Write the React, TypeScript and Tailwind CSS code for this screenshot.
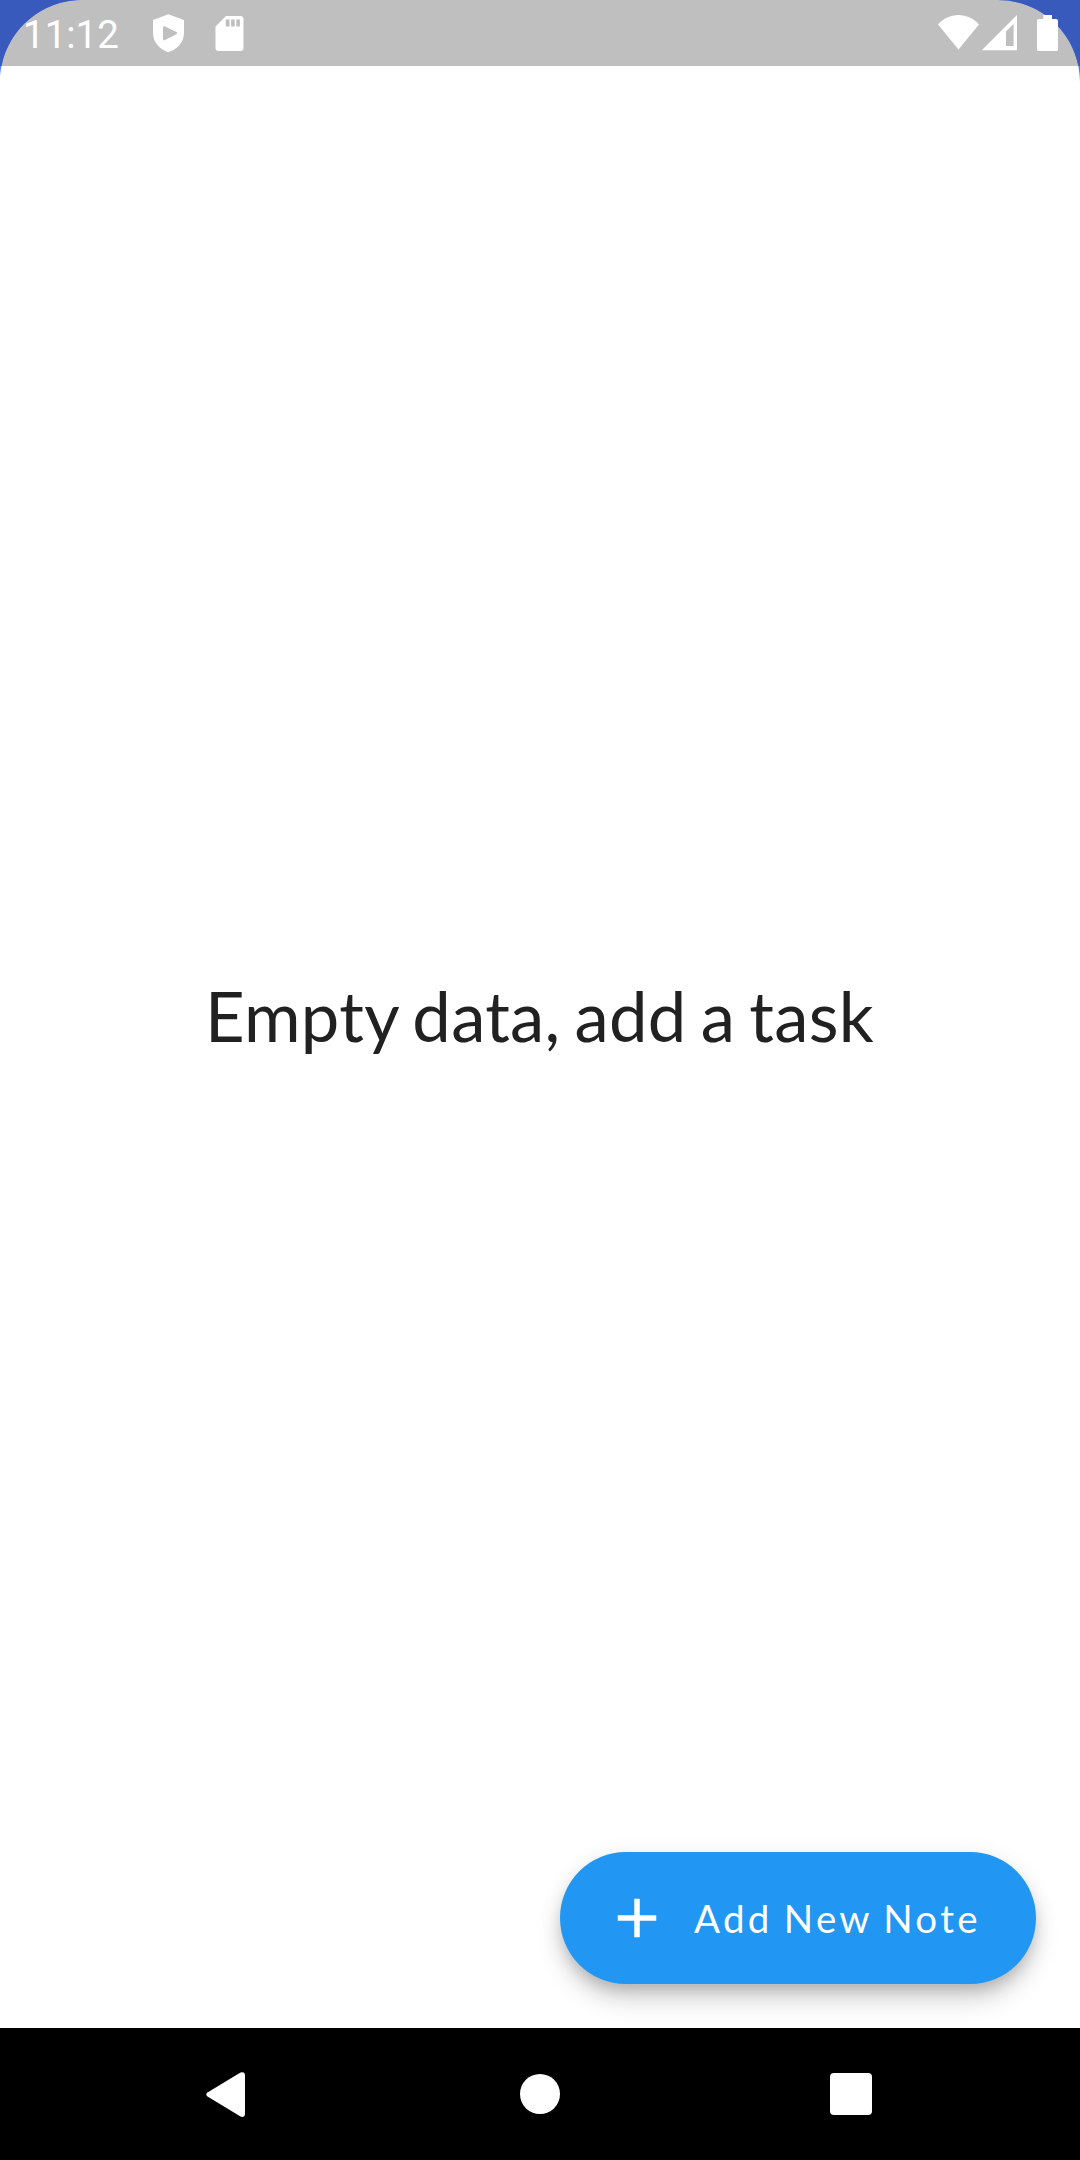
function StatusBar() {
  return (
    <header className="relative z-10 flex h-[66px] shrink-0 items-center justify-between pr-[19px] pl-[23px] text-white">
      <div className="flex h-full items-center">
        <span className="w-[99px] pt-[3px] font-['Roboto',sans-serif] text-[38.5px] leading-[46px] whitespace-nowrap">11:12</span>
        <svg className="ml-[27px] h-[66px] w-[40px]" viewBox="149 0 40 66" fill="currentColor">
          <path
            fillRule="evenodd"
            d="M168.3 14.2 184 20v13c0 9-6.5 16.500-15.700 19.300C159.500 49.500 153 42 153 33V20ZM163 27.500v11.200c0 1.400.9 1.800 2 1.200l11.300-5.700c1.200-.6 1.200-1.500 0-2.100L165 26.400c-1.100-.6-2-.2-2 1.100Z"
          />
        </svg>
        <svg className="ml-[22px] h-[66px] w-[36px]" viewBox="211 0 36 66" fill="currentColor">
          <path
            fillRule="evenodd"
            d="M226 16h14.500a3 3 0 0 1 3 3v29a3 3 0 0 1-3 3h-22a3 3 0 0 1-3-3V26.500Zm-.2 3.600v7h3.700v-7Zm5.300 0v7h3.600v-7Zm5.200 0v7h3.600v-7Z"
          />
        </svg>
      </div>
      <div className="flex h-full items-center">
        <svg className="h-[66px] w-[42px]" viewBox="938 0 42 66" fill="currentColor">
          <path d="M958.500 49.500 938 24.500c5.500-6 12.500-9.500 20.500-9.500s15 3.500 20.500 9.500Z" />
        </svg>
        <svg className="ml-[2.500px] h-[66px] w-[36px]" viewBox="982 0 36 66" fill="currentColor">
          <path fillRule="evenodd" d="M1017 15v35.200H981.800ZM1013.600 24 1006 31.500V46h7.600Z" />
        </svg>
        <svg className="ml-[18px] h-[66px] w-[25px]" viewBox="1036 0 25 66" fill="currentColor">
          <path d="M1043.300 15h8.700v4h4a2 2 0 0 1 2 2v28.500a1.500 1.500 0 0 1-1.500 1.500h-18a1.500 1.500 0 0 1-1.500-1.500V21a2 2 0 0 1 2-2h4.300Z" />
        </svg>
      </div>
    </header>
  );
}

function ScreenCorner({ className }: { className: string }) {
  return (
    <svg className={className} viewBox="0 0 82 82">
      <path d="M0 0H82C36.700 0 0 36.700 0 82Z" fill="#4b79fb" />
      <path d="M0 0H82C36.700 0 0 36.700 0 82Z" fill="#385abc" clipPath="url(#bar)" />
      <clipPath id="bar">
        <rect width="82" height="66" />
      </clipPath>
    </svg>
  );
}

export default function App() {
  return (
    <div className="relative flex h-[2160px] w-[1080px] flex-col overflow-hidden bg-linear-to-b from-[#bfbfbf] from-[66px] to-white to-[66px] font-['Lato',sans-serif]">
      <StatusBar />
      <main className="flex flex-1 flex-col">
        <p className="mt-[908px] pr-px text-center text-[68.75px] leading-[83px] tracking-[0.3px] text-[#212121] [word-spacing:-3.8px]">Empty data, add a task</p>
        <button className="mt-auto mr-[44px] mb-[44px] flex h-[132px] w-[476px] items-center self-end rounded-full bg-[#2196f3] pl-[44px] text-white shadow-[0_16px_26px_-2px_rgba(0,0,0,0.18),0_8px_14px_-3px_rgba(0,0,0,0.14),0_3px_26px_0_rgba(0,0,0,0.06)]">
          <svg className="h-[66px] w-[66px]" viewBox="0 0 24 24" fill="currentColor">
            <path d="M19 13h-6v6h-2v-6H5v-2h6V5h2v6h6v2z" />
          </svg>
          <span className="ml-[24px] text-[38.5px] leading-[46px] tracking-[3.3px] whitespace-nowrap [word-spacing:-2px]">Add New Note</span>
        </button>
      </main>
      <nav className="flex h-[132px] shrink-0 items-center bg-black pl-[204px] text-white">
        <svg className="h-[48px] w-[44px]" viewBox="204 2070 44 48" fill="currentColor">
          <path d="M207.500 2092.500 240.500 2072.500Q245 2071 245 2075.500V2113.500Q245 2118 240.500 2116.500L207.500 2096.500Q205 2094.500 207.500 2092.500Z" />
        </svg>
        <span className="ml-[272px] h-[40px] w-[40px] rounded-full bg-white" />
        <span className="ml-[270px] h-[41.500px] w-[41.500px] rounded-[4px] bg-white" />
      </nav>
      <ScreenCorner className="absolute top-0 left-0 h-[82px] w-[82px]" />
      <ScreenCorner className="absolute top-0 right-0 h-[82px] w-[82px] -scale-x-100" />
    </div>
  );
}
